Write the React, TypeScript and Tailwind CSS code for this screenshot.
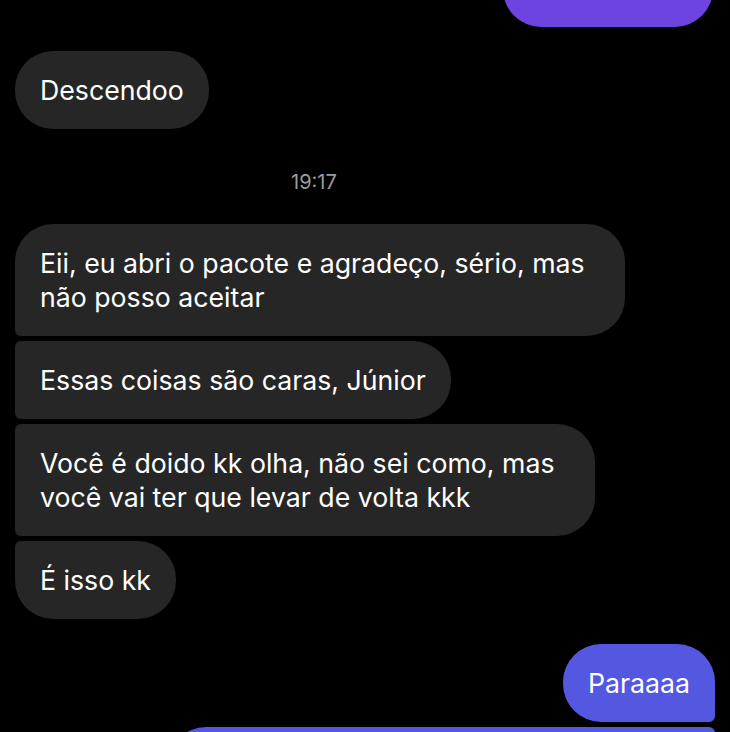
const big = "rounded-[38px]";

function Incoming({ text, corner, w = "" }: { text: string; corner: string; w?: string }) {
  return (
    <div
      className={`max-w-[612px] ${w} bg-[#262626] ${big} ${corner} px-[25px] py-[22px] text-[26.7px] leading-[34px] text-white`}
    >
      {text}
    </div>
  );
}

export default function App() {
  return (
    <div className="h-[732px] overflow-hidden bg-black font-['Inter',sans-serif]">
      <div className="flex flex-col px-[15px]">
        {/* tail of previous sent message */}
        <div className="-mt-[51px] mr-[2px] h-[78px] w-[210px] self-end rounded-[38px] bg-[#6d44e0]" />

        <div className="mt-[24px] self-start">
          <Incoming text="Descendoo" corner="" />
        </div>

        <div className="mt-[42px] pl-[276px] text-[20px] leading-[22px] text-[#9b9b9b]">19:17</div>

        <div className="mt-[31px] flex flex-col items-start gap-[5px]">
          <Incoming
            text="Eii, eu abri o pacote e agradeço, sério, mas não posso aceitar"
            corner="rounded-bl-[6px]"
            w="w-[610px]"
          />
          <Incoming text="Essas coisas são caras, Júnior" corner="rounded-tl-[6px] rounded-bl-[6px]" />
          <Incoming
            text="Você é doido kk olha, não sei como, mas você vai ter que levar de volta kkk"
            corner="rounded-tl-[6px] rounded-bl-[6px]"
            w="w-[580px]"
          />
          <Incoming text="É isso kk" corner="rounded-tl-[6px]" />
        </div>

        <div className="mt-[25px] self-end rounded-[38px] rounded-br-[6px] bg-[#5458e0] px-[25px] py-[22px] text-[26.7px] leading-[34px] text-white">
          Paraaaa
        </div>
        <div className="mt-[5px] h-[78px] w-[547px] self-end rounded-[38px] rounded-tr-[6px] bg-[#5458e0]" />
      </div>
    </div>
  );
}
